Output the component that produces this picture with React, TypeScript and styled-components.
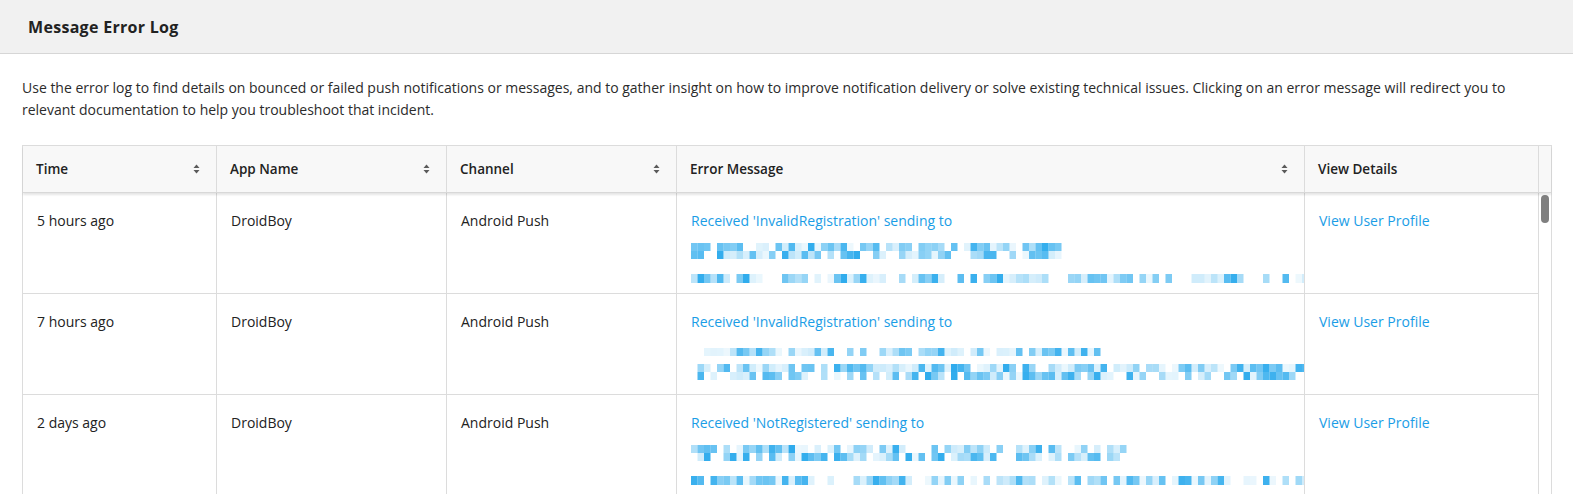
import React from "react";
import styled, { createGlobalStyle } from "styled-components";

interface ErrorRow {
  time: string;
  app: string;
  channel: string;
  message: string;
  seed: number;
  bands: { y: number; h: number; width: number }[];
}

const rows: ErrorRow[] = [
  {
    time: "5 hours ago",
    app: "DroidBoy",
    channel: "Android Push",
    message: "Received 'InvalidRegistration' sending to",
    seed: 11,
    bands: [
      { y: 12, h: 8, width: 375 },
      { y: 20, h: 8, width: 375 },
      { y: 43, h: 9, width: 614 }
    ]
  },
  {
    time: "7 hours ago",
    app: "DroidBoy",
    channel: "Android Push",
    message: "Received 'InvalidRegistration' sending to",
    seed: 29,
    bands: [
      { y: 16, h: 8, width: 405 },
      { y: 32, h: 8, width: 614 },
      { y: 40, h: 8, width: 614 }
    ]
  },
  {
    time: "2 days ago",
    app: "DroidBoy",
    channel: "Android Push",
    message: "Received 'NotRegistered' sending to",
    seed: 47,
    bands: [
      { y: 12, h: 8, width: 440 },
      { y: 20, h: 8, width: 440 },
      { y: 43, h: 9, width: 614 }
    ]
  }
];

const columns = [
  { label: "Time", sortable: true },
  { label: "App Name", sortable: true },
  { label: "Channel", sortable: true },
  { label: "Error Message", sortable: true },
  { label: "View Details", sortable: false }
];

const GRID = "194px 230px 230px 628px 234px";

// deterministic noise so the redacted blocks look the same every run
const rng = (seed: number) => {
  let a = seed;
  return () => {
    a |= 0;
    a = (a + 0x6d2b79f5) | 0;
    let t = Math.imul(a ^ (a >>> 15), 1 | a);
    t = (t + Math.imul(t ^ (t >>> 7), 61 | t)) ^ t;
    return ((t ^ (t >>> 14)) >>> 0) / 4294967296;
  };
};

const Redacted: React.FC<{ seed: number; bands: ErrorRow["bands"] }> = ({ seed, bands }) => {
  const rand = rng(seed);
  const cell = 6.5;
  return (
    <Pixels width="614" height="58" viewBox="0 0 614 58">
      {bands.map((band, bi) =>
        Array.from({ length: Math.ceil(band.width / cell) }).map((_, i) => {
          const r = rand();
          if (r < 0.22) return null;
          const alpha = r < 0.45 ? 0.08 + rand() * 0.15 : 0.3 + rand() * 0.65;
          return (
            <rect
              key={`${bi}-${i}`}
              x={i * cell}
              y={band.y}
              width={cell}
              height={band.h}
              fill="rgb(36,167,236)"
              fillOpacity={alpha}
            />
          );
        })
      )}
    </Pixels>
  );
};

const SortIcon = () => (
  <svg width="7" height="10" viewBox="0 0 7 10">
    <path d="M3.5 0.5 L6.5 4 L0.5 4 Z" fill="#5a5a5a" />
    <path d="M3.5 9.5 L6.5 6 L0.5 6 Z" fill="#5a5a5a" />
  </svg>
);

const App: React.FC = () => (
  <>
    <GlobalStyle />
    <Page>
      <TitleBar>Message Error Log</TitleBar>
      <Intro>
        Use the error log to find details on bounced or failed push notifications or messages, and to gather insight on
        how to improve notification delivery or solve existing technical issues. Clicking on an error message will
        redirect you to relevant documentation to help you troubleshoot that incident.
      </Intro>
      <Table>
        <HeadRow>
          <HeadCells>
            {columns.map((col) => (
              <HeadCell key={col.label}>
                <span>{col.label}</span>
                {col.sortable && <SortIcon />}
              </HeadCell>
            ))}
          </HeadCells>
          <Gutter />
        </HeadRow>
        <Body>
          <BodyRows>
            {rows.map((row, index) => (
              <Row key={index}>
                <Cell>{row.time}</Cell>
                <Cell>{row.app}</Cell>
                <Cell>{row.channel}</Cell>
                <Cell>
                  <Link href="#">{row.message}</Link>
                  <Redacted seed={row.seed} bands={row.bands} />
                </Cell>
                <Cell>
                  <Link href="#">View User Profile</Link>
                </Cell>
              </Row>
            ))}
          </BodyRows>
          <Track>
            <Thumb />
          </Track>
        </Body>
      </Table>
    </Page>
  </>
);

const GlobalStyle = createGlobalStyle`
  html, body {
    margin: 0;
    padding: 0;
    background: #fff;
    font-family: "Open Sans", Lato, Arial, sans-serif;
    color: #222;
  }
`;

const Page = styled.div`
  width: 1573px;
  height: 496px;
  overflow: hidden;
`;

const TitleBar = styled.div`
  height: 54px;
  box-sizing: border-box;
  padding-left: 28px;
  display: flex;
  align-items: center;
  background: #f1f1f1;
  border-bottom: 1px solid #d6d6d6;
  font-size: 16px;
  font-weight: 700;
  letter-spacing: 0.3px;
  color: #222;
`;

const Intro = styled.p`
  margin: 23px 0 0 22px;
  width: 1500px;
  font-size: 14px;
  line-height: 22px;
  color: #2b2b2b;
`;

const Table = styled.div`
  margin: 24px 0 0 22px;
  width: 1530px;
  border: 1px solid #dcdcdc;
  border-bottom: none;
  box-sizing: border-box;
`;

const HeadRow = styled.div`
  display: flex;
  height: 46px;
  background: #f8f8f8;
  border-bottom: 1px solid #d8d8d8;
  box-shadow: 0 2px 2px rgba(0, 0, 0, 0.1);
  position: relative;
  z-index: 1;
`;

const HeadCells = styled.div`
  display: grid;
  grid-template-columns: ${GRID};
`;

const HeadCell = styled.div`
  display: flex;
  align-items: center;
  justify-content: space-between;
  padding: 0 14px 0 13px;
  border-right: 1px solid #dcdcdc;
  font-size: 13.5px;
  font-weight: 600;
  color: #222;

  svg {
    margin-right: 2px;
  }
`;

const Gutter = styled.div`
  flex: 1;
`;

const Body = styled.div`
  display: flex;
  height: 301px;
  overflow: hidden;
`;

const BodyRows = styled.div`
  display: flex;
  flex-direction: column;
`;

const Row = styled.div`
  display: grid;
  grid-template-columns: ${GRID};
  height: 100px;
  flex-shrink: 0;
  border-bottom: 1px solid #dcdcdc;
`;

const Cell = styled.div`
  padding: 18px 14px 0 14px;
  border-right: 1px solid #dcdcdc;
  font-size: 14px;
  line-height: 20px;
  color: #222;
  overflow: hidden;
`;

const Link = styled.a`
  color: #1a9de6;
  text-decoration: none;
`;

const Pixels = styled.svg`
  display: block;
  margin-top: 0;
`;

const Track = styled.div`
  flex: 1;
  display: flex;
  justify-content: center;
  padding-top: 2px;
`;

const Thumb = styled.div`
  width: 8px;
  height: 28px;
  border-radius: 4px;
  background: #7f7f7f;
`;

export default App;
